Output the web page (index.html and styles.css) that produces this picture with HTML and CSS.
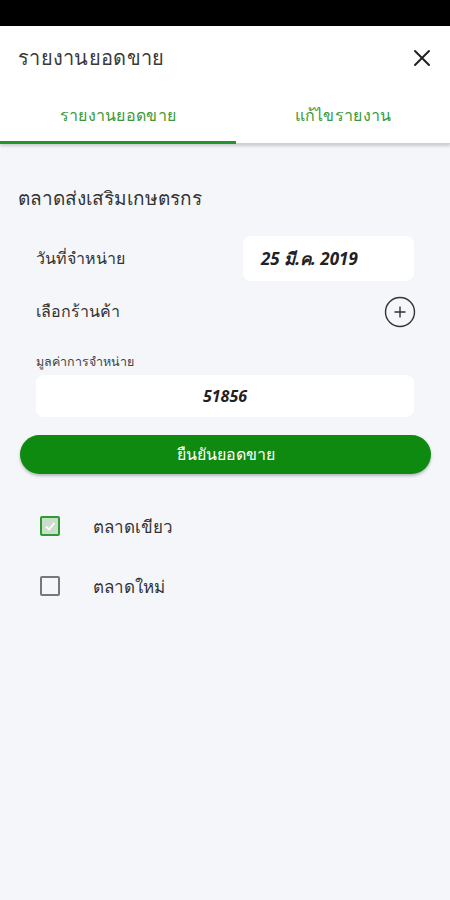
FILE: index.html
```html
<!DOCTYPE html>
<html lang="th">
<head>
<meta charset="utf-8">
<link rel="stylesheet" href="styles.css">
</head>
<body>
<div class="statusbar"></div>
<header class="header">
  <div class="titlebar">
    <h1 class="title">รายงานยอดขาย</h1>
    <svg class="close" width="18" height="18" viewBox="0 0 18 18"><path d="M2 2L16 16M16 2L2 16" stroke="#222" stroke-width="2" stroke-linecap="round"/></svg>
  </div>
  <nav class="tabs">
    <div class="tab active">รายงานยอดขาย</div>
    <div class="tab">แก้ไขรายงาน</div>
  </nav>
</header>
<main class="content">
  <h2 class="section">ตลาดส่งเสริมเกษตรกร</h2>
  <div class="row date">
    <span class="label">วันที่จำหน่าย</span>
    <div class="datebox">25 มี.ค. 2019</div>
  </div>
  <div class="row shop">
    <span class="label">เลือกร้านค้า</span>
    <svg class="plus" width="32" height="32" viewBox="0 0 32 32"><circle cx="16" cy="16" r="14.5" fill="none" stroke="#333" stroke-width="1.4"/><path d="M16 10.5V21.5M10.5 16H21.5" stroke="#333" stroke-width="1.4"/></svg>
  </div>
  <div class="field">
    <div class="small">มูลค่าการจำหน่าย</div>
    <div class="valuebox">51856</div>
  </div>
  <button class="confirm">ยืนยันยอดขาย</button>
  <ul class="checks">
    <li class="check"><span class="box on"><svg width="14" height="14" viewBox="0 0 14 14"><path d="M3 7.5L6 10.5L11.5 4" fill="none" stroke="#fff" stroke-width="1.8"/></svg></span><span class="clabel">ตลาดเขียว</span></li>
    <li class="check"><span class="box"></span><span class="clabel">ตลาดใหม่</span></li>
  </ul>
</main>
</body>
</html>
```
FILE: styles.css
```css
html, body { margin: 0; padding: 0; }
body {
  width: 450px; height: 900px; overflow: hidden;
  background: #f5f6fa;
  font-family: "Noto Sans", "Liberation Sans", sans-serif;
  color: #333;
}
.statusbar { height: 26px; background: #000; }
.header { background: #fff; box-shadow: 0 2px 3px rgba(0,0,0,0.18); position: relative; }
.titlebar { height: 64px; display: flex; align-items: center; justify-content: space-between; padding: 0 19px 0 18px; }
.title { margin: 0; font-size: 20px; font-weight: 400; color: #3a3a3a; letter-spacing: 0.3px; }
.tabs { display: flex; height: 53px; border-bottom: 1px solid #d0d0d0; }
.tab { flex: 1; display: flex; align-items: center; justify-content: center; font-size: 16px; color: #3a9a3a; padding-bottom: 3px; letter-spacing: 0.3px; }
.tab.active { flex: 0 0 236px; border-bottom: 3px solid #23932b; padding-bottom: 0; margin-bottom: -1px; }
.content { padding: 42px 18px 0 18px; }
.section { margin: 0; font-size: 19px; font-weight: 400; color: #333; line-height: 24px; }
.row { display: flex; align-items: center; justify-content: space-between; padding: 0 18px; }
.date { margin-top: 26px; }
.label { font-size: 16px; color: #333; }
.datebox { width: 171px; height: 45px; background: #fff; border-radius: 8px; box-sizing: border-box; padding-left: 18px; display: flex; align-items: center; font-size: 17px; font-weight: 700; font-style: italic; color: #222; }
.shop { margin-top: 8px; height: 45px; padding-right: 16px; }
.field { padding: 0 18px; margin-top: 20px; }
.small { font-size: 12.5px; color: #444; line-height: 16px; }
.valuebox { margin-top: 5px; height: 42px; background: #fff; border-radius: 8px; display: flex; align-items: center; justify-content: center; font-size: 16px; font-weight: 700; font-style: italic; color: #222; }
.confirm { display: block; margin: 18px 0 0 2px; width: 411px; height: 39px; border: none; border-radius: 20px; background: #0f8a10; color: #fff; font-family: inherit; font-size: 16px; box-shadow: 0 2px 3px rgba(0,0,0,0.25); }
.checks { list-style: none; margin: 42px 0 0 0; padding: 0 0 0 22px; }
.check { display: flex; align-items: center; height: 20px; margin-bottom: 40px; }
.box { width: 16px; height: 16px; border: 2px solid #777; border-radius: 2px; display: flex; align-items: center; justify-content: center; }
.box.on { border-color: #2e9a34; background: #c9dfc9; }
.clabel { margin-left: 33px; font-size: 17px; color: #333; }
```
